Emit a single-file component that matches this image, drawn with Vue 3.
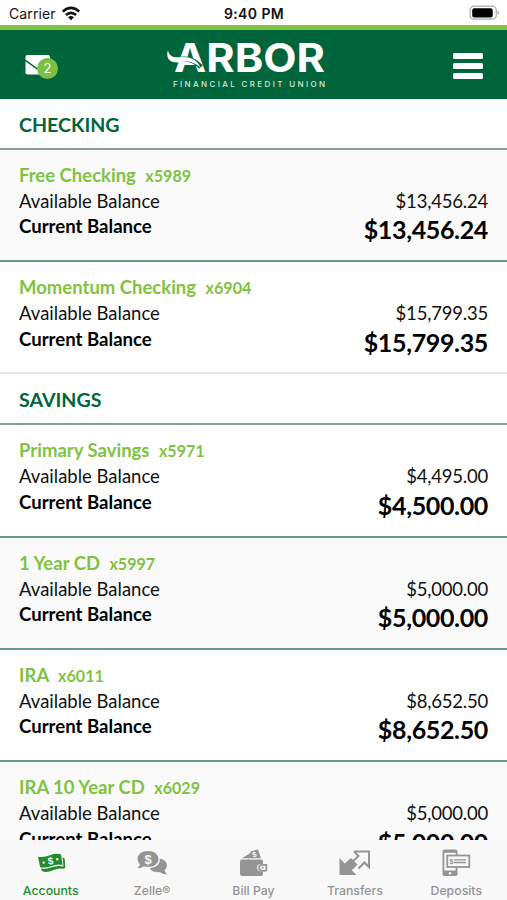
<script setup>
import { ref } from 'vue'

const sections = [
  {
    title: 'CHECKING',
    accounts: [
      { name: 'Free Checking', mask: 'x5989', available: '$13,456.24', current: '$13,456.24' },
      { name: 'Momentum Checking', mask: 'x6904', available: '$15,799.35', current: '$15,799.35' },
    ],
  },
  {
    title: 'SAVINGS',
    accounts: [
      { name: 'Primary Savings', mask: 'x5971', available: '$4,495.00', current: '$4,500.00' },
      { name: '1 Year CD', mask: 'x5997', available: '$5,000.00', current: '$5,000.00' },
      { name: 'IRA', mask: 'x6011', available: '$8,652.50', current: '$8,652.50' },
      { name: 'IRA 10 Year CD', mask: 'x6029', available: '$5,000.00', current: '$5,000.00' },
    ],
  },
]

const tabs = ['Accounts', 'Zelle®', 'Bill Pay', 'Transfers', 'Deposits']
const activeTab = ref('Accounts')

// shading alternates, but starts on the second row in savings
function isShaded(section, index) {
  return section.title === 'CHECKING' ? index % 2 === 0 : index % 2 === 1
}
</script>

<template>
  <div class="screen">
    <div class="status-bar">
      <div class="carrier">
        <span class="carrier-name">Carrier</span>
        <svg width="20" height="15" viewBox="0 0 20 15">
          <g fill="none" stroke="#111" stroke-width="2.6">
            <path d="M1.8 5.6Q10-1.7 18.2 5.6" />
            <path d="M4.9 9Q10 4.6 15.1 9" />
          </g>
          <path d="M7.1 11.3Q10 8.9 12.9 11.3L10 14.2Z" fill="#111" />
        </svg>
      </div>
      <span class="clock">9:40 PM</span>
      <svg class="battery" width="32" height="16" viewBox="0 0 32 16">
        <rect x="1.2" y="1.2" width="26" height="13" rx="3.8" fill="#fff" stroke="#aaa" stroke-width="1.2" />
        <rect x="3.2" y="3.2" width="20.5" height="9.2" rx="2" fill="#000" />
        <path d="M28.6 5.5Q31.4 7.7 28.6 9.9Z" fill="#999" />
      </svg>
    </div>

    <header class="app-header">
      <button class="mail" type="button" aria-label="Messages">
        <svg width="26" height="21" viewBox="0 0 26 21">
          <rect x="0.5" y="0" width="24.5" height="19.5" rx="2" fill="#fff" />
          <path d="M0 5L12.5 14L25 5" fill="none" stroke="#00653b" stroke-width="1.5" />
        </svg>
        <span class="badge">2</span>
      </button>
      <svg class="logo" width="164" height="52" viewBox="0 0 164 52">
        <text x="10" y="32" class="logo-name" textLength="151" lengthAdjust="spacingAndGlyphs">ARBOR</text>
        <path d="M4 16Q8 21 15 19.5Q28 17 37 27" fill="none" stroke="#00653b" stroke-width="5" />
        <path d="M4 10C4.5 15 8 17.8 15 17.2C25 16 33 19 36.5 27.5C29 21 23 20.5 16 22.3C7 23.5 1 19 4 10Z" fill="#fff" />
        <text x="9" y="46.6" class="logo-sub" textLength="152">FINANCIAL CREDIT UNION</text>
      </svg>
      <button class="menu" type="button" aria-label="Menu">
        <span /><span /><span />
      </button>
    </header>

    <main class="accounts">
      <section v-for="section in sections" :key="section.title" class="account-section">
        <h2 class="section-title">{{ section.title }}</h2>
        <article
          v-for="(account, index) in section.accounts"
          :key="account.mask"
          class="account"
          :class="{ shaded: isShaded(section, index) }"
        >
          <div class="account-name">
            {{ account.name }} <span class="mask">{{ account.mask }}</span>
          </div>
          <div class="balance">
            <span>Available Balance</span>
            <span class="available">{{ account.available }}</span>
          </div>
          <div class="balance current">
            <span>Current Balance</span>
            <span class="amount">{{ account.current }}</span>
          </div>
        </article>
      </section>
    </main>

    <nav class="tab-bar">
      <button
        v-for="tab in tabs"
        :key="tab"
        type="button"
        class="tab"
        :class="{ active: tab === activeTab }"
        @click="activeTab = tab"
      >
        <svg v-if="tab === 'Accounts'" width="34" height="28" viewBox="0 0 34 28">
          <path d="M7 19.5Q11 20.5 17 18.5Q23 16 29.5 17.5L28.5 8.5Q30.5 8.5 30.7 10L31.3 18Q31.3 19.8 29 19.8Q24 19 19 21.3Q13 23.8 9 22.5Q7.5 22 7 19.5Z" fill="currentColor" />
          <path d="M4 7.8Q10 8.8 16 6.3Q22 3.9 27 5.4L28.6 16Q23 14.8 17 17.2Q11.5 19.3 6.2 18.2Z" fill="currentColor" />
          <text x="16.5" y="15.3" class="dollar" font-size="10" transform="rotate(-8 16.5 12)" fill="#f8f8f8">$</text>
          <circle cx="9.7" cy="13.6" r="1.2" fill="#f8f8f8" />
          <circle cx="23.3" cy="10.2" r="1.2" fill="#f8f8f8" />
        </svg>
        <svg v-else-if="tab === 'Zelle®'" width="34" height="28" viewBox="0 0 34 28">
          <path d="M13 2C7 2 2.5 5.5 2.5 10Q2.5 13 5 15.2Q4.5 17.5 2.3 19.2Q6.5 19.3 9 17.3Q11 18 13 18C19 18 23.5 14.5 23.5 10S19 2 13 2Z" fill="currentColor" />
          <path d="M25 9.5Q25.5 18 14.5 19.6Q17.5 23.8 24.5 23Q28 25.5 32 25.4Q30 23.5 29.5 21.3Q32 19 32 16.2Q31.5 11 25 9.5Z" fill="currentColor" />
          <text x="13" y="14.7" class="dollar" font-size="13" fill="#f8f8f8">$</text>
        </svg>
        <svg v-else-if="tab === 'Bill Pay'" width="34" height="28" viewBox="0 0 34 28">
          <path d="M6 10.5H25Q27 10.5 27 12.5V15H25Q21 15 21 18.7T25 22.5H27V25Q27 27 25 27H6Q4 27 4 25V12.5Q4 10.5 6 10.5Z" fill="currentColor" />
          <path d="M6 9.3L14 4.2V9.3Z" fill="currentColor" />
          <path d="M11.5 9.3L15 2.2L22 0.5L25 9.3Z" fill="currentColor" />
          <text x="18.5" y="8" class="dollar" font-size="7.5" transform="rotate(-15 18.5 5.5)" fill="#f8f8f8">$</text>
          <path d="M30.3 15.8H26Q23 15.8 23 18.8T26 21.8H29.3Q30.3 21.8 30.3 20.8Z" fill="none" stroke="currentColor" stroke-width="1.8" />
          <circle cx="26.5" cy="18.8" r="1" fill="currentColor" />
        </svg>
        <svg v-else-if="tab === 'Transfers'" width="34" height="28" viewBox="0 0 34 28">
          <path d="M1.5 9V24.5Q1.5 26 3 26H18.5L13.8 21.2L19.5 15.5L13 9L6.8 14.5Z" fill="currentColor" />
          <path d="M16 2.5H31V18L26.5 13.5L20.5 19.5M16 2.5L20.5 7L15 12.3" fill="none" stroke="currentColor" stroke-width="2" />
        </svg>
        <svg v-else width="34" height="28" viewBox="0 0 34 28">
          <rect x="3.5" y="0.5" width="15" height="26.5" rx="2" fill="currentColor" />
          <path d="M5.3 3.8H16.7V21.5H5.3Z" fill="#f8f8f8" />
          <rect x="8.3" y="6.5" width="22" height="11.5" fill="#f8f8f8" stroke="currentColor" stroke-width="1.8" />
          <path d="M15 10.9H27M15 13.5H27" stroke="currentColor" stroke-width="1.4" />
          <text x="12.4" y="14.8" class="dollar" font-size="7" fill="currentColor">$</text>
          <circle cx="11" cy="24.2" r="1.2" fill="#f8f8f8" />
        </svg>
        <span class="tab-label">{{ tab }}</span>
      </button>
    </nav>
  </div>
</template>

<style>
body {
  margin: 0;
  overflow: hidden;
}
</style>

<style scoped>
.screen {
  display: flex;
  flex-direction: column;
  height: 900px;
  overflow: hidden;
  background: #fff;
  color: #111;
  font-family: Lato, 'Liberation Sans', sans-serif;
}

button {
  border: none;
  padding: 0;
  background: none;
  cursor: pointer;
}

.status-bar {
  display: grid;
  grid-template-columns: 1fr auto 1fr;
  align-items: center;
  height: 25px;
  padding: 1px 6px 0 9px;
  box-sizing: border-box;
  font-family: Inter, sans-serif;
  font-size: 14px;
  flex-shrink: 0;
}

.carrier {
  display: flex;
  align-items: center;
  gap: 5px;
}

.carrier-name {
  letter-spacing: 0.1px;
}

.clock {
  margin-right: 2px;
  font-weight: 600;
  letter-spacing: 0.4px;
}

.battery {
  justify-self: end;
}

.app-header {
  display: flex;
  align-items: center;
  justify-content: space-between;
  height: 74px;
  padding: 2px 24px 0 25px;
  box-sizing: border-box;
  border-top: 5px solid #80c342;
  background: #00653b;
  flex-shrink: 0;
}

.mail {
  position: relative;
  width: 33px;
  height: 25px;
  text-align: left;
}

.mail svg {
  display: block;
}

.badge {
  position: absolute;
  left: 12px;
  top: 5px;
  width: 21px;
  height: 21px;
  border-radius: 50%;
  background: #7ac143;
  color: #fff;
  font: 13px/21px Inter, sans-serif;
  text-align: center;
}

.logo {
  margin-right: 19px;
  overflow: visible;
}

.logo-name {
  font: 700 39px Inter, sans-serif;
  fill: #fff;
}

.logo-sub {
  font: 500 8px Inter, sans-serif;
  fill: #d5e6dc;
}

.menu {
  display: flex;
  flex-direction: column;
  gap: 4px;
  width: 30px;
}

.menu span {
  height: 6px;
  border-radius: 1.5px;
  background: #fff;
}

.accounts {
  flex: 1;
  min-height: 0;
  overflow: hidden;
}

.section-title {
  height: 50.9px;
  margin: 0;
  padding-left: 19px;
  box-sizing: border-box;
  border-bottom: 2px solid #899da0;
  color: #00653b;
  font-size: 19.6px;
  font-weight: 700;
  line-height: 51px;
}

.account {
  height: 112.3px;
  padding: 12px 19px 0;
  box-sizing: border-box;
  border-bottom: 2px solid #629c82;
}

.account:last-child {
  border-bottom-color: #e8e8e8;
}

.account.shaded {
  background: #fafafa;
}

.account-name {
  color: #80c342;
  font-size: 18.5px;
  font-weight: 700;
  line-height: 26px;
}

.mask {
  margin-left: 5px;
  font-size: 16.1px;
}

.balance {
  display: flex;
  justify-content: space-between;
  height: 25.5px;
  font-size: 18.5px;
  line-height: 25.5px;
}

.current {
  color: #000;
  font-size: 18.6px;
  font-weight: 700;
}

.available {
  letter-spacing: -0.2px;
}

.amount {
  font-size: 25px;
  line-height: 31.4px;
  letter-spacing: -0.35px;
}

.tab-bar {
  display: grid;
  grid-template-columns: repeat(5, 1fr);
  height: 60px;
  background: #f8f8f8;
  flex-shrink: 0;
}

.tab {
  display: flex;
  flex-direction: column;
  align-items: center;
  justify-content: flex-start;
  padding-top: 9px;
  color: #949494;
}

.tab.active {
  color: #238b2d;
}

.tab-label {
  margin-top: 6px;
  font: 500 12.3px/16px Inter, sans-serif;
}

.dollar {
  font-family: 'Liberation Sans', sans-serif;
  font-weight: 700;
  text-anchor: middle;
}
</style>
